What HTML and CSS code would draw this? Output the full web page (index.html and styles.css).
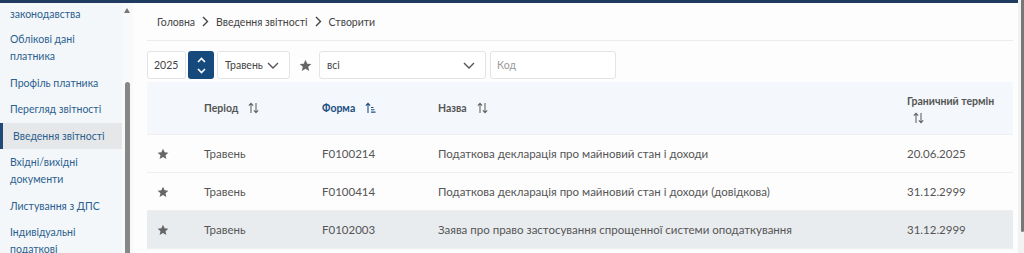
FILE: index.html
```html
<!DOCTYPE html>
<html lang="uk">
<head>
<meta charset="UTF-8">
<title>Введення звітності</title>
<link rel="stylesheet" href="styles.css">
</head>
<body>
    <div class="page">
        <div class="topbar"></div>
        <div class="layout">
            <aside class="sidebar">
                <ul class="menu">
                    <li class="first">законодавства</li>
                    <li>Облікові дані<br>платника</li>
                    <li>Профіль платника</li>
                    <li>Перегляд звітності</li>
                    <li class="active">Введення звітності</li>
                    <li>Вхідні/вихідні<br>документи</li>
                    <li>Листування з ДПС</li>
                    <li>Індивідуальні<br>податкові</li>
                </ul>
            </aside>
            <div class="side-scroll">
                <span class="arrow-up"></span>
                <span class="thumb"></span>
            </div>
            <main class="content">
                <nav class="crumbs">
                    <span>Головна</span>
                    <svg class="crumb-sep" width="7" height="11" viewBox="0 0 7 11"><path d="M1 1l4.5 4.5L1 10" fill="none" stroke="#444" stroke-width="1.4"/></svg>
                    <span>Введення звітності</span>
                    <svg class="crumb-sep" width="7" height="11" viewBox="0 0 7 11"><path d="M1 1l4.5 4.5L1 10" fill="none" stroke="#444" stroke-width="1.4"/></svg>
                    <span>Створити</span>
                </nav>

                <div class="filters">
                    <div class="field year">2025</div>
                    <div class="spinner">
                        <svg width="9" height="6" viewBox="0 0 9 6"><path d="M1 5l3.5-3.5L8 5" fill="none" stroke="#fff" stroke-width="1.6"/></svg>
                        <svg width="9" height="6" viewBox="0 0 9 6"><path d="M1 1l3.5 3.5L8 1" fill="none" stroke="#fff" stroke-width="1.6"/></svg>
                    </div>
                    <div class="field select month">
                        <span>Травень</span>
                        <svg width="12" height="7" viewBox="0 0 12 7"><path d="M1 1l5 5 5-5" fill="none" stroke="#555" stroke-width="1.4"/></svg>
                    </div>
                    <svg class="fav" width="13" height="13" viewBox="0 0 24 24"><path d="M12 1.5l3.2 7.1 7.6.7-5.8 5.1 1.8 7.6L12 18l-6.8 4 1.8-7.6L1.2 9.3l7.6-.7z" fill="#666"/></svg>
                    <div class="field select kind">
                        <span>всі</span>
                        <svg width="12" height="7" viewBox="0 0 12 7"><path d="M1 1l5 5 5-5" fill="none" stroke="#555" stroke-width="1.4"/></svg>
                    </div>
                    <div class="field code"><span class="placeholder">Код</span></div>
                </div>

                <div class="table">
                    <div class="row head">
                        <div class="cell"></div>
                        <div class="cell">Період
                            <svg class="sort" width="11" height="12" viewBox="0 0 11 12"><path d="M3 11V1.5M0.8 3.7L3 1.3l2.2 2.4M8 1v9.5M5.8 8.3L8 10.7l2.2-2.4" fill="none" stroke="#666" stroke-width="1.1"/></svg>
                        </div>
                        <div class="cell sorted">Форма
                            <svg class="sort" width="11" height="12" viewBox="0 0 11 12"><path d="M3 11V1.5M0.8 3.7L3 1.3l2.2 2.4M6 5.5h2.5M6 7.8h3.5M6 10.1h4.5" fill="none" stroke="#1c4f82" stroke-width="1.1"/></svg>
                        </div>
                        <div class="cell">Назва
                            <svg class="sort" width="11" height="12" viewBox="0 0 11 12"><path d="M3 11V1.5M0.8 3.7L3 1.3l2.2 2.4M8 1v9.5M5.8 8.3L8 10.7l2.2-2.4" fill="none" stroke="#666" stroke-width="1.1"/></svg>
                        </div>
                        <div class="cell stack">Граничний термін
                            <svg class="sort" width="11" height="12" viewBox="0 0 11 12"><path d="M3 11V1.5M0.8 3.7L3 1.3l2.2 2.4M8 1v9.5M5.8 8.3L8 10.7l2.2-2.4" fill="none" stroke="#666" stroke-width="1.1"/></svg>
                        </div>
                    </div>

                    <div class="row">
                        <div class="cell"><svg class="star" width="12" height="12" viewBox="0 0 24 24"><path d="M12 1.5l3.2 7.1 7.6.7-5.8 5.1 1.8 7.6L12 18l-6.8 4 1.8-7.6L1.2 9.3l7.6-.7z" fill="#666"/></svg></div>
                        <div class="cell">Травень</div>
                        <div class="cell">F0100214</div>
                        <div class="cell">Податкова декларація про майновий стан і доходи</div>
                        <div class="cell">20.06.2025</div>
                    </div>
                    <div class="row">
                        <div class="cell"><svg class="star" width="12" height="12" viewBox="0 0 24 24"><path d="M12 1.5l3.2 7.1 7.6.7-5.8 5.1 1.8 7.6L12 18l-6.8 4 1.8-7.6L1.2 9.3l7.6-.7z" fill="#666"/></svg></div>
                        <div class="cell">Травень</div>
                        <div class="cell">F0100414</div>
                        <div class="cell">Податкова декларація про майновий стан і доходи (довідкова)</div>
                        <div class="cell">31.12.2999</div>
                    </div>
                    <div class="row hover">
                        <div class="cell"><svg class="star" width="12" height="12" viewBox="0 0 24 24"><path d="M12 1.5l3.2 7.1 7.6.7-5.8 5.1 1.8 7.6L12 18l-6.8 4 1.8-7.6L1.2 9.3l7.6-.7z" fill="#666"/></svg></div>
                        <div class="cell">Травень</div>
                        <div class="cell">F0102003</div>
                        <div class="cell">Заява про право застосування спрощенної системи оподаткування</div>
                        <div class="cell">31.12.2999</div>
                    </div>
                </div>
            </main>
        </div>
    </div>
    <div class="page-scroll"><span class="thumb"></span></div>
</body>
</html>
```

FILE: styles.css
```css
/* page frame */
html, body {
    height: 100%;
}
body {
    margin: 0;
    display: flex;
    font-family: Lato, "Open Sans", sans-serif;
    font-size: 11.5px;
    color: #555;
    background: #fdfdfd;
    overflow: hidden;
}
.page {
    flex: 1;
    display: flex;
    flex-direction: column;
}
.topbar {
    height: 3px;
    background: #1f3c60;
}
.layout {
    flex: 1;
    display: flex;
    min-height: 0;
}

/* left menu */
.sidebar {
    width: 122px;
    background: #f4f7fa;
    overflow: hidden;
}
.menu {
    list-style: none;
    margin: 0;
    padding: 0;
    font-size: 10.5px;
}
.menu li {
    padding: 5px 4px 4.5px 10px;
    line-height: 17px;
    color: #2b5f8f;
}
.menu li.first {
    padding-top: 3px;
    padding-bottom: 3px;
}
.menu li.active {
    background: #e6e7e8;
    border-left: 3px solid #1f4a78;
    padding-left: 10px;
}
.side-scroll {
    width: 11px;
    background: #f7f9fb;
    position: relative;
}
.side-scroll .arrow-up {
    position: absolute;
    top: 5px;
    left: 2px;
    border-left: 3.5px solid transparent;
    border-right: 3.5px solid transparent;
    border-bottom: 5px solid #777;
}
.side-scroll .thumb {
    position: absolute;
    top: 79px;
    bottom: 0;
    left: 3px;
    width: 5px;
    background: #878787;
    border-radius: 3px 3px 0 0;
}

/* main area */
.content {
    width: 866px;
    margin-left: 14px;
}
.crumbs {
    height: 37px;
    display: flex;
    align-items: center;
    gap: 7px;
    padding-left: 10px;
    border-bottom: 1px solid #ececec;
    color: #444;
    font-size: 10.5px;
}
.filters {
    display: flex;
    align-items: center;
    margin-top: 10px;
    height: 28px;
    font-size: 10.5px;
}
.field {
    box-sizing: border-box;
    height: 28px;
    border: 1px solid #e2e4e7;
    border-radius: 3px;
    background: #fff;
    display: flex;
    align-items: center;
    padding: 0 6px;
    color: #444;
}
.year {
    width: 39px;
}
.spinner {
    width: 26px;
    height: 28px;
    margin-left: 2px;
    background: #164a7d;
    border-radius: 3px;
    display: flex;
    flex-direction: column;
    align-items: center;
    justify-content: center;
    gap: 5px;
}
.select {
    justify-content: space-between;
    padding: 0 10px 0 7px;
}
.month {
    width: 73px;
    margin-left: 3px;
}
.fav {
    margin: 0 7px 0 9px;
}
.kind {
    width: 167px;
}
.code {
    width: 126px;
    margin-left: 4px;
}
.placeholder {
    color: #999;
}

/* table */
.table {
    margin-top: 3px;
}
.row {
    display: grid;
    grid-template-columns: 45px 118px 116px 469px 118px;
    height: 37px;
    border-bottom: 1px solid #efefef;
    color: #555;
}
.row.head {
    height: 52px;
    background: #f4f7fb;
    font-weight: bold;
    font-size: 10.5px;
    color: #555;
}
.row.hover {
    background: #e9ecef;
}
.cell {
    display: flex;
    align-items: center;
    padding-left: 12px;
}
.row .cell:first-child {
    padding-left: 10px;
}
.cell .sort {
    margin-left: 10px;
}
.cell.sorted {
    color: #1c4f82;
}
.cell.stack {
    flex-direction: column;
    align-items: flex-start;
    justify-content: center;
    line-height: 17px;
}
.cell.stack .sort {
    margin: 2px 0 0 6px;
}

/* browser scrollbar at the right */
.page-scroll {
    width: 6px;
    background: #f2f2f2;
}
.page-scroll .thumb {
    display: block;
    margin-left: 3px;
    width: 3px;
    height: 232px;
    background: #777;
    border-radius: 0 0 2px 2px;
}
```
